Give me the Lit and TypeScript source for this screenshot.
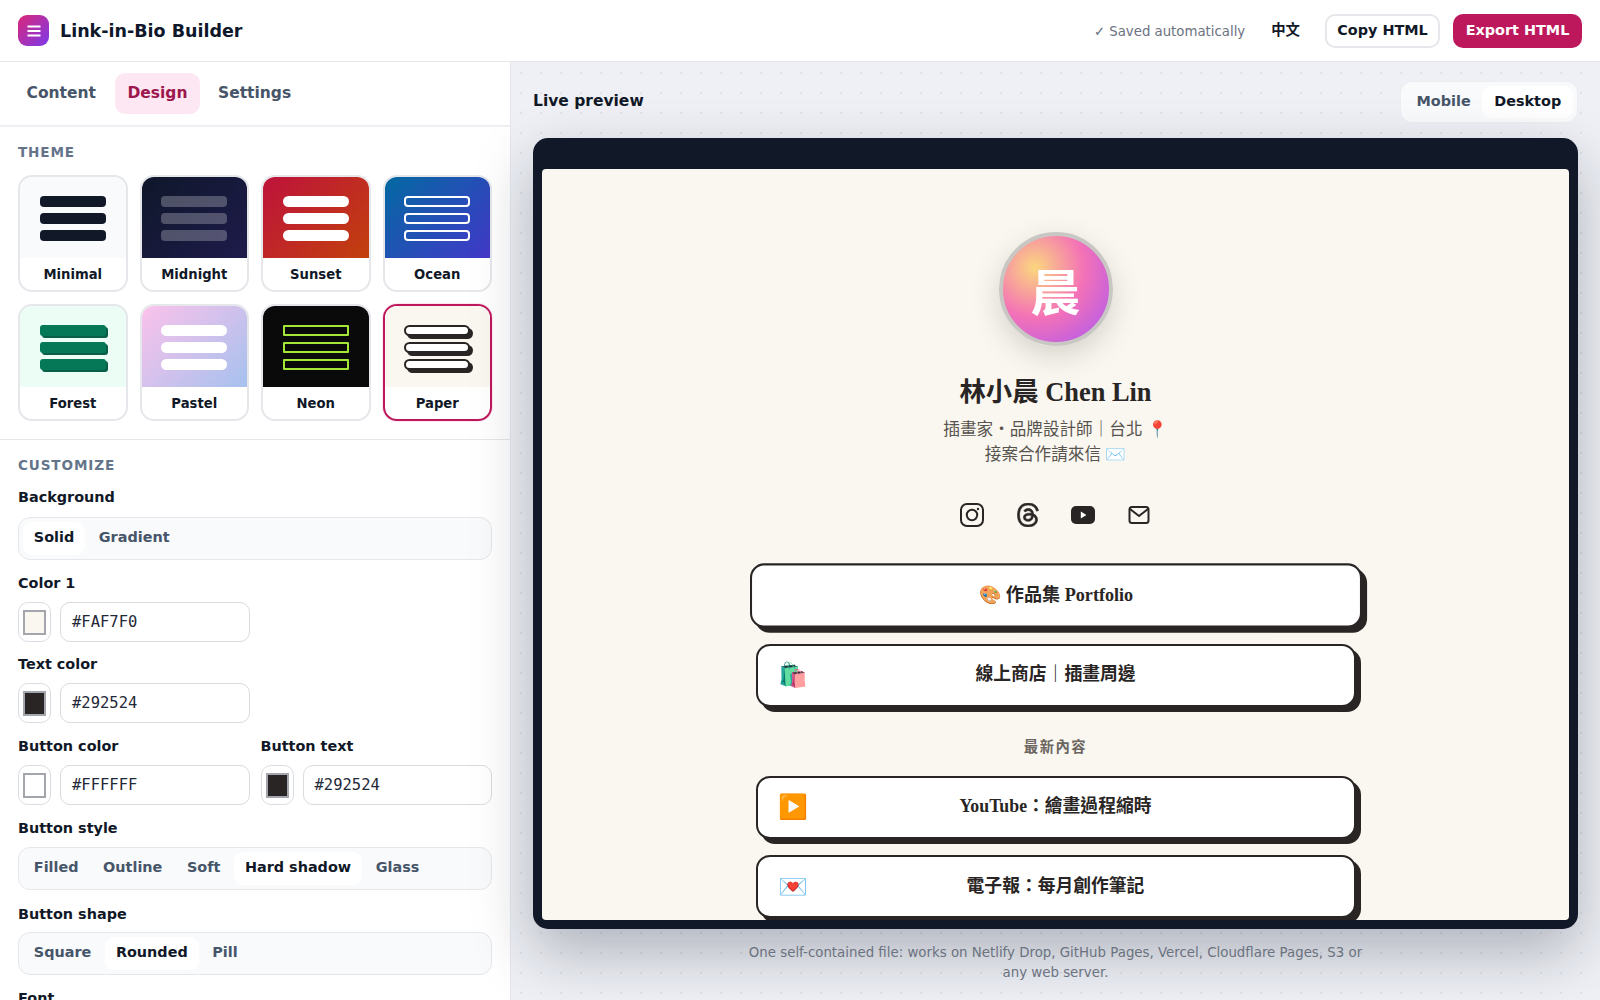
import { LitElement, html, css } from "lit";
import { customElement } from "lit/decorators.js";

const themes = [
  ["Minimal", "t-minimal"], ["Midnight", "t-midnight"], ["Sunset", "t-sunset"], ["Ocean", "t-ocean"],
  ["Forest", "t-forest"], ["Pastel", "t-pastel"], ["Neon", "t-neon"], ["Paper", "t-paper"],
];

const threads = "M12.186 24h-.007c-3.581-.024-6.334-1.205-8.184-3.509C2.35 18.44 1.5 15.586 1.472 12.01v-.017c.03-3.579.879-6.43 2.525-8.482C5.845 1.205 8.6.024 12.18 0h.014c2.746.02 5.043.725 6.826 2.098 1.677 1.29 2.858 3.13 3.509 5.467l-2.04.569c-1.104-3.96-3.898-5.984-8.304-6.015-2.91.022-5.11.936-6.54 2.717C4.307 6.504 3.616 8.914 3.589 12c.027 3.086.718 5.496 2.057 7.164 1.43 1.783 3.631 2.698 6.54 2.717 2.623-.02 4.358-.631 5.8-2.045 1.647-1.613 1.618-3.593 1.09-4.798-.31-.71-.873-1.3-1.634-1.75-.192 1.352-.622 2.446-1.284 3.272-.886 1.102-2.14 1.704-3.73 1.79-1.202.065-2.361-.218-3.259-.801-1.063-.689-1.685-1.74-1.752-2.964-.065-1.19.408-2.285 1.33-3.082.88-.76 2.119-1.207 3.583-1.291a13.853 13.853 0 0 1 3.02.142c-.126-.742-.375-1.332-.75-1.757-.513-.586-1.308-.883-2.359-.89h-.029c-.844 0-1.992.232-2.721 1.32L7.734 7.847c.98-1.454 2.568-2.256 4.478-2.256h.044c3.194.02 5.097 1.975 5.287 5.388.108.046.216.094.321.142 1.49.7 2.58 1.761 3.154 3.07.797 1.82.871 4.79-1.548 7.158-1.85 1.81-4.094 2.628-7.277 2.65Zm1.003-11.69c-.242 0-.487.007-.739.021-1.836.103-2.98.946-2.916 2.143.067 1.256 1.452 1.839 2.784 1.767 1.224-.065 2.818-.543 3.086-3.71a10.5 10.5 0 0 0-2.215-.221z";

@customElement("app-root")
export class AppRoot extends LitElement {
  static styles = css`
    :host { display: block; height: 100vh; overflow: hidden; font-family: "DejaVu Sans", "Noto Sans CJK TC", sans-serif; color: #111827; background: #fff; }
    * { box-sizing: border-box; }
    .header { position: relative; z-index: 3; height: 62px; background: #fff; border-bottom: 1px solid #e5e7eb; display: flex; align-items: center; padding: 0 18px; }
    .logo { width: 31px; height: 31px; border-radius: 9px; background: linear-gradient(135deg, #db2777, #7c3aed); display: flex; align-items: center; justify-content: center; margin-right: 11px; }
    .title { font-size: 17.5px; font-weight: 700; color: #0f172a; flex: 1; }
    .saved { font-size: 13.3px; color: #6b7280; margin-right: 26px; padding-top: 2px; }
    .lang { font-size: 14.4px; font-weight: 700; color: #111827; margin-right: 25px; padding-bottom: 4px; }
    .btn { height: 34px; border-radius: 10px; font-size: 14.4px; font-weight: 700; display: flex; align-items: center; justify-content: center; padding-bottom: 2px; }
    .copy { width: 115px; border: 2px solid #e5e7eb; background: #fff; color: #111827; margin-right: 13px; }
    .export { width: 129px; background: #be185d; color: #fff; }

    .body { display: flex; height: 938px; }
    .side { width: 511px; flex: none; background: #fff; border-right: 1px solid #e5e7eb; overflow: hidden; }
    .tabs { height: 65px; display: flex; align-items: center; gap: 6px; padding: 0 13.5px; border-bottom: 2px solid #eef0f3; }
    .tab { height: 41px; padding: 0 13px 2px; border-radius: 10px; display: flex; align-items: center; font-size: 15.5px; font-weight: 700; color: #475569; }
    .tab.on { background: #fce7f3; color: #9d174d; padding: 0 12.5px 2px; margin-right: -1px; }
    .sec { padding: 17px 18px 0; }
    .sec.theme { border-bottom: 1px solid #e5e7eb; height: 313px; }
    .h { font-size: 13.6px; font-weight: 700; letter-spacing: 0.85px; color: #64748b; height: 16px; line-height: 16px; }
    .grid { display: grid; grid-template-columns: repeat(4, 1fr); gap: 12px; margin-top: 15px; }
    .card { height: 117px; border: 2px solid #e5e7eb; border-radius: 14px; overflow: hidden; background: #fff; }
    .card.on { border-color: #be185d; box-shadow: 0 0 0 1px #fce7f3; }
    .thumb { height: 81px; padding-top: 2px; display: flex; flex-direction: column; align-items: center; justify-content: center; gap: 6px; }
    .bar { width: 66px; height: 11px; border-radius: 4px; flex: none; }
    .cardl { font-size: 13.2px; font-weight: 700; color: #111827; text-align: center; line-height: 33px; }
    .t-minimal { background: #f8fafc; } .t-minimal .bar { background: #111827; }
    .t-midnight { background: linear-gradient(135deg, #0f172a, #1e1b4b); } .t-midnight .bar { background: rgba(255,255,255,.25); }
    .t-sunset { background: linear-gradient(135deg, #be123c, #c2410c); } .t-sunset .bar { background: #fff; border-radius: 6px; }
    .t-ocean { background: linear-gradient(135deg, #0369a1, #4338ca); } .t-ocean .bar { border: 2.5px solid #fff; }
    .t-forest { background: #ecfdf5; } .t-forest .bar { background: #047857; box-shadow: 2px 2px 0 #065f46; border-radius: 3px; }
    .t-pastel { background: linear-gradient(135deg, #fbc2eb, #a6c1ee); } .t-pastel .bar { background: #fff; border-radius: 6px; }
    .t-neon { background: #0a0a0a; } .t-neon .bar { border: 2.5px solid #a3e635; border-radius: 1px; }
    .t-paper { background: #faf7f0; } .t-paper .bar { background: #fff; border: 2px solid #292524; border-radius: 6px; box-shadow: 3px 3px 0 #292524; }

    .lab { font-size: 14.4px; font-weight: 700; color: #111827; height: 20px; line-height: 20px; }
    .seg { height: 43px; background: #f8fafc; border: 1px solid #e5e7eb; border-radius: 12px; padding: 4px; display: flex; gap: 3px; margin-top: 9px; }
    .seg span { height: 33px; padding: 0 10.8px 3px; display: flex; align-items: center; font-size: 14.4px; font-weight: 700; color: #475569; border-radius: 9px; }
    .seg span.on { background: #fff; color: #111827; }
    .seg.first { margin-top: 10px; }
    .seg.tight { margin-top: 8px; }
    .colors { display: flex; gap: 11px; }
    .colors > div { flex: 1; min-width: 0; }
    .half { width: 231.5px; }
    .cw { display: flex; gap: 9px; margin-top: 9px; height: 40px; }
    .sw { width: 33px; flex: none; border: 1px solid #d9dde3; border-radius: 10px; background: #fff; display: flex; align-items: center; justify-content: center; }
    .sw i { display: block; width: 23px; height: 25px; border: 2px solid #a3a7ad; }
    .inp { flex: 1; min-width: 0; border: 1.5px solid #d8dbe0; border-radius: 10px; display: flex; align-items: center; padding: 0 11px; font-family: "DejaVu Sans Mono", monospace; font-size: 15.5px; color: #1f2937; }
    .g12 { margin-top: 12px; } .g13 { margin-top: 13px; } .g14 { margin-top: 14px; }

    .main { position: relative; z-index: 2; flex: 1; min-width: 0; display: flex; flex-direction: column; padding: 19px 22px 0; background-color: #eef0f5; background-image: radial-gradient(#dde1e8 1px, transparent 1px); background-size: 20px 20px; background-position: 0 1px; }
    .bar-top { display: flex; align-items: center; justify-content: space-between; height: 42px; }
    .live { font-size: 15.5px; font-weight: 700; color: #111827; padding-bottom: 2px; }
    .toggle { display: flex; height: 42px; padding: 4px; border-radius: 12px; background: #f8fafc; border: 1px solid #eceef2; }
    .toggle span { display: flex; align-items: center; padding: 0 11.8px 2px; font-size: 14.4px; font-weight: 700; color: #475569; border-radius: 9px; }
    .toggle span.on { background: #fff; color: #111827; }
    .device { flex: none; height: 791px; margin-top: 15px; background: #111827; border-radius: 15px; padding: 31px 9px 9px; box-shadow: 0 24px 60px rgba(15, 23, 42, .28); }
    .screen { height: 100%; background: #faf7f0; border-radius: 4px; overflow: hidden; color: #292524; font-family: "Liberation Serif", "Noto Sans CJK TC", serif; display: flex; flex-direction: column; align-items: center; padding-top: 63px; }
    .avatar { width: 114px; height: 114px; flex: none; border-radius: 50%; border: 4px solid #c9c7c4; background: radial-gradient(circle at 30% 30%, #fbd77e, #f472b6 47%, #a855f7 100%); box-shadow: 0 10px 30px rgba(0,0,0,.15); display: flex; align-items: center; justify-content: center; color: #fff; font-size: 50px; font-weight: 700; }
    .name { margin: 29px 0 0; font-size: 26.4px; font-weight: 700; line-height: 34px; }
    .bio { margin-top: 8px; font-size: 16.6px; line-height: 25px; color: #57534e; text-align: center; }
    .socials { display: flex; gap: 31.6px; margin-top: 36px; height: 24px; flex: none; color: #292524; }
    .socials svg { width: 24px; height: 24px; display: block; }
    .links { width: 600px; flex: none; margin-top: 37px; display: flex; flex-direction: column; gap: 16.5px; }
    .link { position: relative; height: 63px; flex: none; background: #fff; border: 2px solid #292524; border-radius: 14px; box-shadow: 5px 5px 0 #292524; display: flex; align-items: center; justify-content: center; font-size: 17.8px; font-weight: 700; color: #292524; padding-bottom: 6px; }
    .link.feat { transform: scale(1.02); }
    .emo { position: absolute; left: 20px; top: 50%; transform: translateY(-50%); font-size: 24px; font-weight: 400; line-height: 1; }
    .sect { text-align: center; font-size: 14.4px; font-weight: 700; letter-spacing: 1.44px; color: #6b6560; line-height: 20px; margin: -2.5px 0 2.5px; padding-top: 16px; }
    .foot { margin: 14px auto 0; width: 640px; text-align: center; font-size: 13.35px; line-height: 20px; color: #6b7280; }
  `;

  private seg(items: string[], on: string, cls = "") {
    return html`<div class="seg ${cls}">${items.map((i) => html`<span class=${i === on ? "on" : ""}>${i}</span>`)}</div>`;
  }

  private color(label: string, value: string, fill: string) {
    return html`<div>
      <div class="lab">${label}</div>
      <div class="cw"><div class="sw"><i style="background:${fill}"></i></div><div class="inp">${value}</div></div>
    </div>`;
  }

  render() {
    return html`
      <div class="header">
        <div class="logo"><svg width="16" height="14" viewBox="0 0 16 14"><path d="M1.5 2.5h13M1.5 7h13M1.5 11.5h13" stroke="#fff" stroke-width="2.2"/></svg></div>
        <div class="title">Link-in-Bio Builder</div>
        <div class="saved">✓ Saved automatically</div>
        <div class="lang">中文</div>
        <div class="btn copy">Copy HTML</div>
        <div class="btn export">Export HTML</div>
      </div>
      <div class="body">
        <aside class="side">
          <div class="tabs">
            <div class="tab">Content</div>
            <div class="tab on">Design</div>
            <div class="tab">Settings</div>
          </div>
          <div class="sec theme">
            <div class="h">THEME</div>
            <div class="grid">
              ${themes.map(([n, c]) => html`<div class="card ${n === "Paper" ? "on" : ""}">
                <div class="thumb ${c}"><div class="bar"></div><div class="bar"></div><div class="bar"></div></div>
                <div class="cardl">${n}</div>
              </div>`)}
            </div>
          </div>
          <div class="sec">
            <div class="h">CUSTOMIZE</div>
            <div class="lab g14">Background</div>
            ${this.seg(["Solid", "Gradient"], "Solid", "first")}
            <div class="g13 half">${this.color("Color 1", "#FAF7F0", "#FAF7F0")}</div>
            <div class="g12 half">${this.color("Text color", "#292524", "#292524")}</div>
            <div class="g13 colors">
              ${this.color("Button color", "#FFFFFF", "#FFFFFF")}
              ${this.color("Button text", "#292524", "#292524")}
            </div>
            <div class="g13"><div class="lab">Button style</div>${this.seg(["Filled", "Outline", "Soft", "Hard shadow", "Glass"], "Hard shadow")}</div>
            <div class="g14"><div class="lab">Button shape</div>${this.seg(["Square", "Rounded", "Pill"], "Rounded", "tight")}</div>
            <div class="g13"><div class="lab">Font</div></div>
          </div>
        </aside>
        <main class="main">
          <div class="bar-top">
            <div class="live">Live preview</div>
            <div class="toggle"><span>Mobile</span><span class="on">Desktop</span></div>
          </div>
          <div class="device">
            <div class="screen">
              <div class="avatar">晨</div>
              <h1 class="name">林小晨 Chen Lin</h1>
              <div class="bio">插畫家・品牌設計師｜台北 📍<br />接案合作請來信 ✉️</div>
              <div class="socials">
                <svg viewBox="0 0 24 24" fill="none" stroke="currentColor" stroke-width="2"><rect x="1" y="1" width="22" height="22" rx="6"/><circle cx="12" cy="12" r="5.2"/><circle cx="18" cy="6" r="1.2" fill="currentColor" stroke="none"/></svg>
                <svg viewBox="0 0 24 24" fill="currentColor" stroke="currentColor" stroke-width=".6"><path d=${threads} /></svg>
                <svg viewBox="0 0 24 24"><rect x="0" y="3" width="24" height="18" rx="5" fill="currentColor"/><path d="M9.8 8.6v6.8l5.6-3.4z" fill="#fff"/></svg>
                <svg viewBox="0 0 24 24" fill="none" stroke="currentColor" stroke-width="2" stroke-linejoin="round"><rect x="2.5" y="4" width="19" height="16" rx="2.5"/><path d="M3 6l9 7 9-7"/></svg>
              </div>
              <div class="links">
                <div class="link feat">🎨 作品集 Portfolio</div>
                <div class="link"><span class="emo">🛍️</span>線上商店｜插畫周邊</div>
                <div class="sect">最新內容</div>
                <div class="link"><span class="emo">▶️</span>YouTube：繪畫過程縮時</div>
                <div class="link"><span class="emo">💌</span>電子報：每月創作筆記</div>
              </div>
            </div>
          </div>
          <div class="foot">One self-contained file: works on Netlify Drop, GitHub Pages, Vercel, Cloudflare Pages, S3 or any web server.</div>
        </main>
      </div>
    `;
  }
}
